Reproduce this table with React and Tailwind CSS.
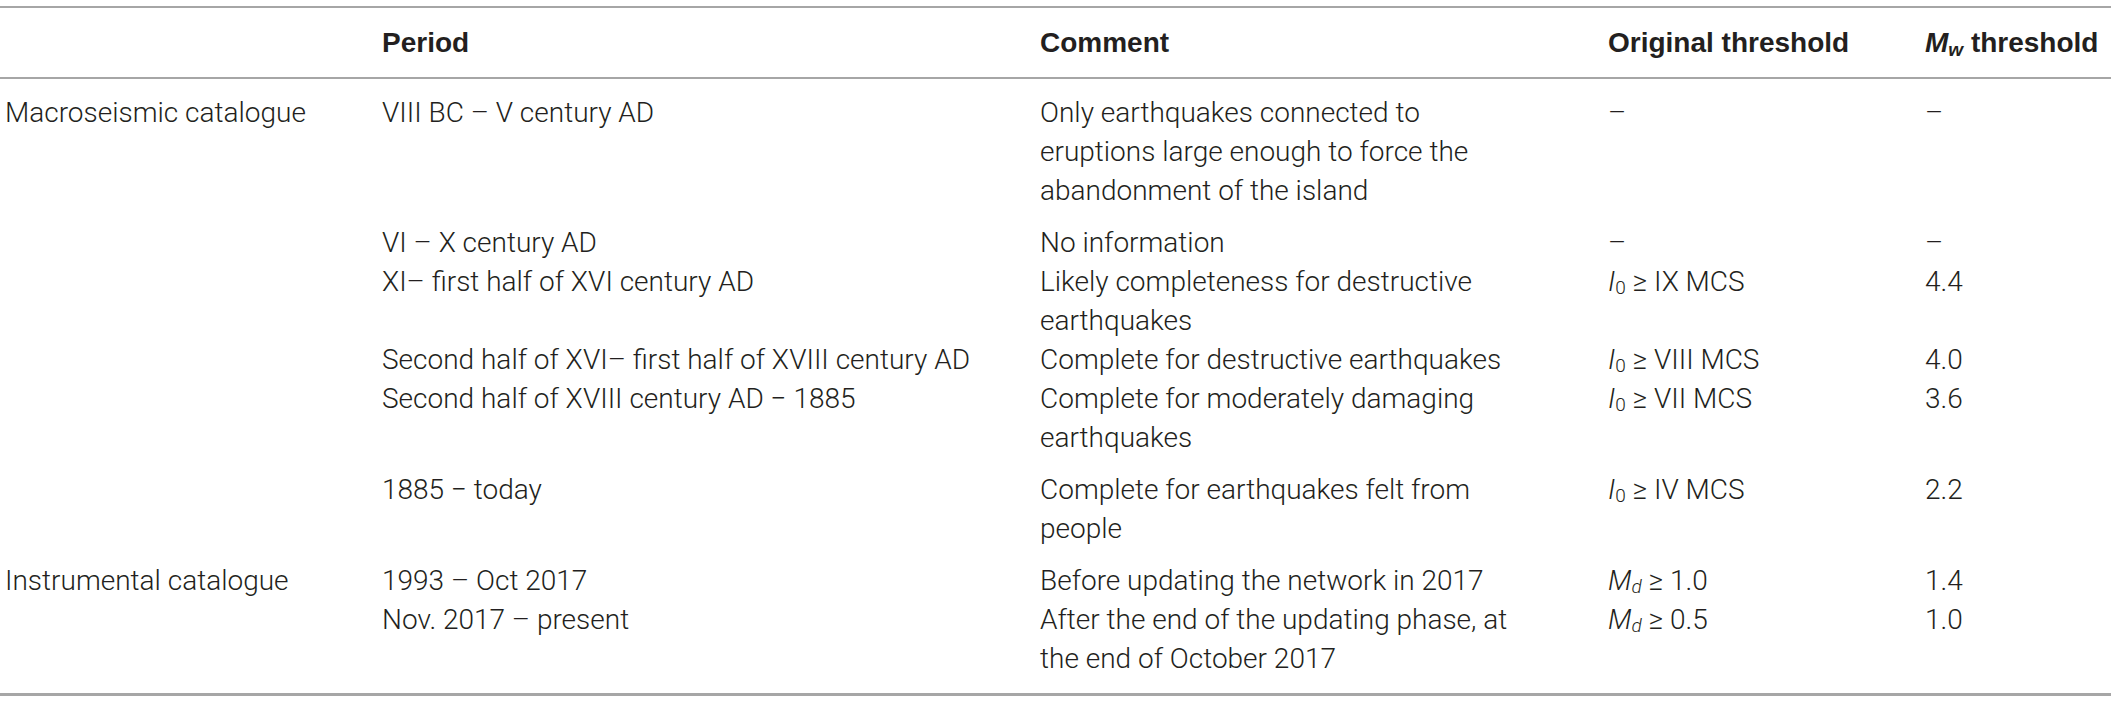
const rows = [
  {
    group: 'Macroseismic catalogue',
    period: 'VIII BC – V century AD',
    comment: ['Only earthquakes connected to', 'eruptions large enough to force the', 'abandonment of the island'],
    orig: '–',
    mw: '–',
    pad: 'pt-[14px]',
  },
  { period: 'VI – X century AD', comment: ['No information'], orig: '–', mw: '–', pad: 'pt-[13px]' },
  {
    period: 'XI– first half of XVI century AD',
    comment: ['Likely completeness for destructive', 'earthquakes'],
    orig: { sym: 'I', sub: '0', subItalic: false, rest: 'IX MCS' },
    mw: '4.4',
    pad: 'pt-0',
  },
  {
    period: 'Second half of XVI– first half of XVIII century AD',
    comment: ['Complete for destructive earthquakes'],
    orig: { sym: 'I', sub: '0', subItalic: false, rest: 'VIII MCS' },
    mw: '4.0',
    pad: 'pt-0',
  },
  {
    period: 'Second half of XVIII century AD − 1885',
    comment: ['Complete for moderately damaging', 'earthquakes'],
    orig: { sym: 'I', sub: '0', subItalic: false, rest: 'VII MCS' },
    mw: '3.6',
    pad: 'pt-0',
  },
  {
    period: '1885 − today',
    comment: ['Complete for earthquakes felt from', 'people'],
    orig: { sym: 'I', sub: '0', subItalic: false, rest: 'IV MCS' },
    mw: '2.2',
    pad: 'pt-[13px]',
  },
  {
    group: 'Instrumental catalogue',
    period: '1993 – Oct 2017',
    comment: ['Before updating the network in 2017'],
    orig: { sym: 'M', sub: 'd', subItalic: true, rest: '1.0' },
    mw: '1.4',
    pad: 'pt-[13px]',
  },
  {
    period: 'Nov. 2017 – present',
    comment: ['After the end of the updating phase, at', 'the end of October 2017'],
    orig: { sym: 'M', sub: 'd', subItalic: true, rest: '0.5' },
    mw: '1.0',
    pad: 'pt-0 pb-[15px]',
  },
];

function Threshold({ value }) {
  if (typeof value === 'string') return <span>{value}</span>;
  return (
    <span>
      <span className="italic">{value.sym}</span>
      <sub className={`text-[19px] relative top-[3px] align-baseline ${value.subItalic ? 'italic' : ''}`}>{value.sub}</sub>
      <span> ≥ {value.rest}</span>
    </span>
  );
}

export default function App() {
  return (
    <div className="bg-white w-[2117px] h-[722px] pt-[6px] font-['Roboto','Liberation_Sans',sans-serif] text-[#231f20]">
      <table className="table-fixed border-collapse w-[2111px]">
        <colgroup>
          <col className="w-[377px]" />
          <col className="w-[658px]" />
          <col className="w-[568px]" />
          <col className="w-[317px]" />
          <col className="w-[191px]" />
        </colgroup>
        <thead>
          <tr className="border-t-2 border-b-2 border-[#a6a6a6] h-[71px] text-[28px] font-bold font-['Liberation_Sans',sans-serif] text-left">
            <th className="pl-[5px]" />
            <th className="pl-[5px] font-bold">Period</th>
            <th className="pl-[5px] font-bold">Comment</th>
            <th className="pl-[5px] font-bold">Original threshold</th>
            <th className="pl-[5px] font-bold">
              <span className="italic">M</span>
              <sub className="italic text-[19px] relative top-[4px] align-baseline">w</sub> threshold
            </th>
          </tr>
        </thead>
        <tbody className="text-[28px] leading-[39px] font-light">
          {rows.map((r, i) => (
            <tr key={i} className={`align-top ${i === rows.length - 1 ? 'border-b-[3px] border-[#a6a6a6]' : ''}`}>
              <td className={`pl-[5px] ${r.pad}`}>{r.group || ''}</td>
              <td className={`pl-[5px] ${r.pad}`}>{r.period}</td>
              <td className={`pl-[5px] ${r.pad}`}>
                {r.comment.map((line, j) => (
                  <div key={j}>{line}</div>
                ))}
              </td>
              <td className={`pl-[5px] ${r.pad}`}>
                <Threshold value={r.orig} />
              </td>
              <td className={`pl-[5px] ${r.pad}`}>{r.mw}</td>
            </tr>
          ))}
        </tbody>
      </table>
    </div>
  );
}
